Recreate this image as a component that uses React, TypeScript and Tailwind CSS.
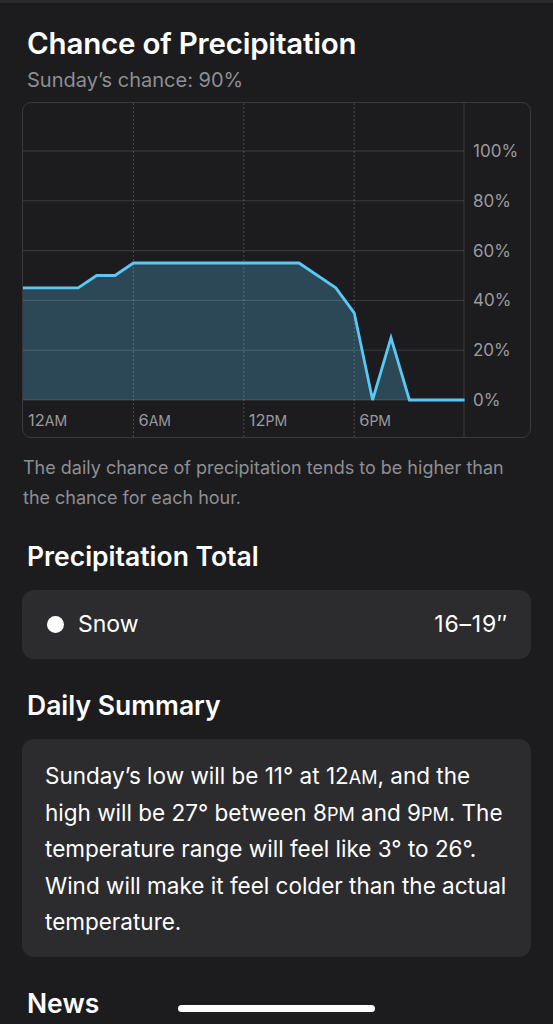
const HOURS = 18.4;
const pctY = (p: number) => 297 - 2.49 * p;

// hourly chance, [hour, percent]
const POINTS: [number, number][] = [
  [0, 45],
  [3, 45],
  [4, 50],
  [5, 50],
  [6, 55],
  [15, 55],
  [17, 45],
  [18, 35],
  [19, 0],
  [20, 25],
  [21, 0],
  [24, 0],
];

const Y_TICKS = [100, 80, 60, 40, 20, 0];
const X_TICKS = [
  { h: 0, n: "12", s: "AM" },
  { h: 6, n: "6", s: "AM" },
  { h: 12, n: "12", s: "PM" },
  { h: 18, n: "6", s: "PM" },
];

function PrecipChart() {
  const pts = POINTS.map(([h, p]) => `${(h * HOURS).toFixed(1)},${pctY(p).toFixed(1)}`);
  const line = `M${pts.join(" L")}`;
  const area = `${line} L441,297 L0,297 Z`;

  return (
    <div className="mt-[9px] h-[336px] overflow-hidden rounded-[9px] border border-[#39393b]">
      <svg width="506" height="334" viewBox="0 0 506 334" className="block">
        <path d={area} fill="#2c4856" />
        {Y_TICKS.map((p) => (
          <line
            key={p}
            x1="0"
            x2="441"
            y1={pctY(p)}
            y2={pctY(p)}
            stroke="#ffffff"
            strokeOpacity="0.14"
            strokeWidth="1"
          />
        ))}
        {[6, 12, 18].map((h) => (
          <line
            key={h}
            x1={h * HOURS}
            x2={h * HOURS}
            y1="0"
            y2="334"
            stroke="#ffffff"
            strokeOpacity="0.2"
            strokeWidth="1"
            strokeDasharray="2 2"
          />
        ))}
        <line x1="441" x2="441" y1="0" y2="334" stroke="#ffffff" strokeOpacity="0.14" />
        <path d={line} fill="none" stroke="#5ac8f5" strokeWidth="2.8" strokeLinejoin="miter" />
        {Y_TICKS.map((p) => (
          <text key={p} x="450" y={pctY(p) + 6} fill="#9a9a9f" fontSize="17">
            {p}%
          </text>
        ))}
        {X_TICKS.map((t) => (
          <text key={t.h} x={t.h * HOURS + 5} y="323" fill="#9a9a9f" fontSize="16.5">
            {t.n}
            <tspan fontSize="14">{t.s}</tspan>
          </text>
        ))}
      </svg>
    </div>
  );
}

export default function App() {
  return (
    <div className="relative min-h-[1024px] w-[553px] overflow-hidden bg-[#1c1c1e] font-['Inter',sans-serif] text-white">
      <div className="h-[3px] bg-[#2a2a2c]" />
      <div className="px-[22px]">
        <h1 className="mt-[22px] pl-[5px] text-[29.5px] leading-[36px] font-semibold tracking-[-0.2px]">
          Chance of Precipitation
        </h1>
        <p className="mt-[7px] pl-[5px] text-[20px] leading-[25px] text-[#8e8e93]">
          Sunday’s chance: 90%
        </p>

        <PrecipChart />

        <p className="mt-[15px] pl-[1px] text-[18px] leading-[29.5px] text-[#8e8e93]">
          The daily chance of precipitation tends to be higher than
          <br />
          the chance for each hour.
        </p>

        <h2 className="mt-[28px] pl-[5px] text-[26.5px] leading-[32px] font-semibold">
          Precipitation Total
        </h2>
        <div className="mt-[18px] flex h-[69px] items-center justify-between rounded-[12px] bg-[#2c2c2e] pr-[23px] pl-[25px]">
          <div className="flex items-center gap-[14px]">
            <span className="h-[17px] w-[17px] rounded-full bg-white" />
            <span className="text-[23px]">Snow</span>
          </div>
          <span className="text-[23px] tracking-[0.8px]">16–19″</span>
        </div>

        <h2 className="mt-[30px] pl-[5px] text-[26.5px] leading-[32px] font-semibold">
          Daily Summary
        </h2>
        <div className="mt-[18px] rounded-[12px] bg-[#2c2c2e] pt-[19px] pr-[8px] pb-[16px] pl-[23px] text-[22.5px] leading-[36.5px]">
          Sunday’s low will be 11° at 12<span className="text-[18px] leading-none">AM</span>, and the
          <br />
          high will be 27° between 8<span className="text-[18px] leading-none">PM</span> and 9
          <span className="text-[18px] leading-none">PM</span>. The
          <br />
          temperature range will feel like 3° to 26°.
          <br />
          Wind will make it feel colder than the actual
          <br />
          temperature.
        </div>

        <h2 className="mt-[30px] pl-[5px] text-[26.5px] leading-[32px] font-semibold">News</h2>
      </div>
      <div className="absolute bottom-[12px] left-[178px] h-[7px] w-[197px] rounded-full bg-white" />
    </div>
  );
}
